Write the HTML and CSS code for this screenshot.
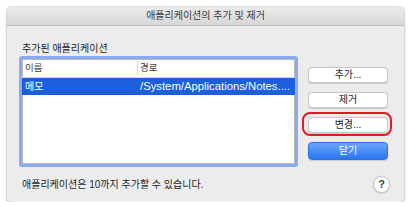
FILE: index.html
```html
<!DOCTYPE html>
<html lang="ko">
<head>
<meta charset="utf-8">
<link rel="stylesheet" href="styles.css">
</head>
<body>
<div class="window">
  <div class="titlebar">애플리케이션의 추가 및 제거</div>
  <div class="content">
    <div class="label">추가된 애플리케이션</div>
    <div class="table">
      <div class="thead">
        <div class="col1">이름</div>
        <div class="col2">경로</div>
      </div>
      <div class="row selected">
        <div class="col1">메모</div>
        <div class="col2 path">/System/Applications/Notes....</div>
      </div>
    </div>
    <div class="buttons">
      <button class="btn">추가...</button>
      <button class="btn">제거</button>
      <div class="highlight">
        <button class="btn">변경...</button>
        <span class="ring"></span>
      </div>
      <button class="btn primary">닫기</button>
    </div>
    <div class="footer">
      <div class="note">애플리케이션은 10까지 추가할 수 있습니다.</div>
      <button class="help">?</button>
    </div>
  </div>
</div>
</body>
</html>
```
FILE: styles.css
```css
html, body {
  margin: 0;
  padding: 0;
  background: #ffffff;
}
body {
  font-family: "Liberation Sans", "Noto Sans CJK KR", sans-serif;
  color: #1e1e1e;
}
.window {
  margin: 7px 0 0 7px;
  width: 397px;
  height: 195px;
  background: #ececec;
  border-radius: 4px;
  box-shadow: 0 0 0 1px rgba(0,0,0,0.08), 0 1px 3px rgba(0,0,0,0.25);
  display: flex;
  flex-direction: column;
  overflow: hidden;
}
.titlebar {
  height: 18px;
  line-height: 18px;
  text-align: center;
  font-size: 10px;
  color: #3a3a3a;
  background: linear-gradient(#ebebeb, #d7d7d7);
  border-bottom: 1px solid #c2c2c2;
}
.content {
  display: grid;
  grid-template-columns: 279px 80px;
  column-gap: 10px;
  padding: 16px 0 0 12px;
}
.label {
  grid-column: 1 / 3;
  font-size: 10px;
  line-height: 14px;
  height: 14px;
  padding-left: 3px;
}
.table {
  height: 105px;
  background: #fff;
  border: 3px solid #89abf3;
  border-radius: 3px;
  box-shadow: inset 0 0 0 1px #b9b9b9;
}
.thead, .row {
  display: flex;
}
.thead {
  height: 18px;
  line-height: 18px;
  font-size: 9.5px;
  color: #3c3c3c;
  border-bottom: 1px solid #d8d8d8;
}
.col1 {
  width: 116px;
  padding-left: 3px;
  box-sizing: border-box;
}
.thead .col1 {
  border-right: 1px solid #d8d8d8;
  margin: 2px 0;
  line-height: 14px;
}
.thead .col2 {
  padding-left: 2px;
}
.col2 {
  flex: 1;
  padding-left: 2px;
  white-space: nowrap;
}
.row {
  height: 17px;
  line-height: 17px;
  font-size: 10px;
}
.row.selected {
  background: #1b5fdd;
  color: #fff;
}
.path {
  font-size: 11.3px;
}
.buttons {
  display: flex;
  flex-direction: column;
  gap: 9px;
  margin-top: 11px;
}
.btn {
  display: block;
  width: 80px;
  height: 16px;
  padding: 0;
  font-family: inherit;
  font-size: 10px;
  line-height: 14px;
  color: #262626;
  background: #ffffff;
  border: 1px solid #c8c8c8;
  border-radius: 4px;
  box-shadow: 0 0.5px 1px rgba(0,0,0,0.15);
}
.btn.primary {
  height: 18px;
  color: #fff;
  border: 1px solid #2d6fe6;
  background: linear-gradient(#6ba8fb, #2a76f3);
}
.highlight {
  position: relative;
}
.ring {
  position: absolute;
  left: -6px;
  right: -4px;
  top: -5px;
  bottom: -3px;
  border: 2px solid #e31a22;
  border-radius: 8px;
}
.footer {
  grid-column: 1 / 3;
  display: flex;
  justify-content: space-between;
  align-items: center;
  margin-top: 9px;
  padding-left: 3px;
}
.note {
  font-size: 10px;
  line-height: 14px;
}
.help {
  width: 17px;
  height: 17px;
  margin-right: -2px;
  padding: 0;
  border-radius: 50%;
  background: #fff;
  border: 1px solid #c4c4c4;
  box-shadow: 0 0.5px 1.5px rgba(0,0,0,0.2);
  font-family: "Liberation Sans", sans-serif;
  font-weight: bold;
  font-size: 11px;
  color: #404040;
  line-height: 15px;
}
```
